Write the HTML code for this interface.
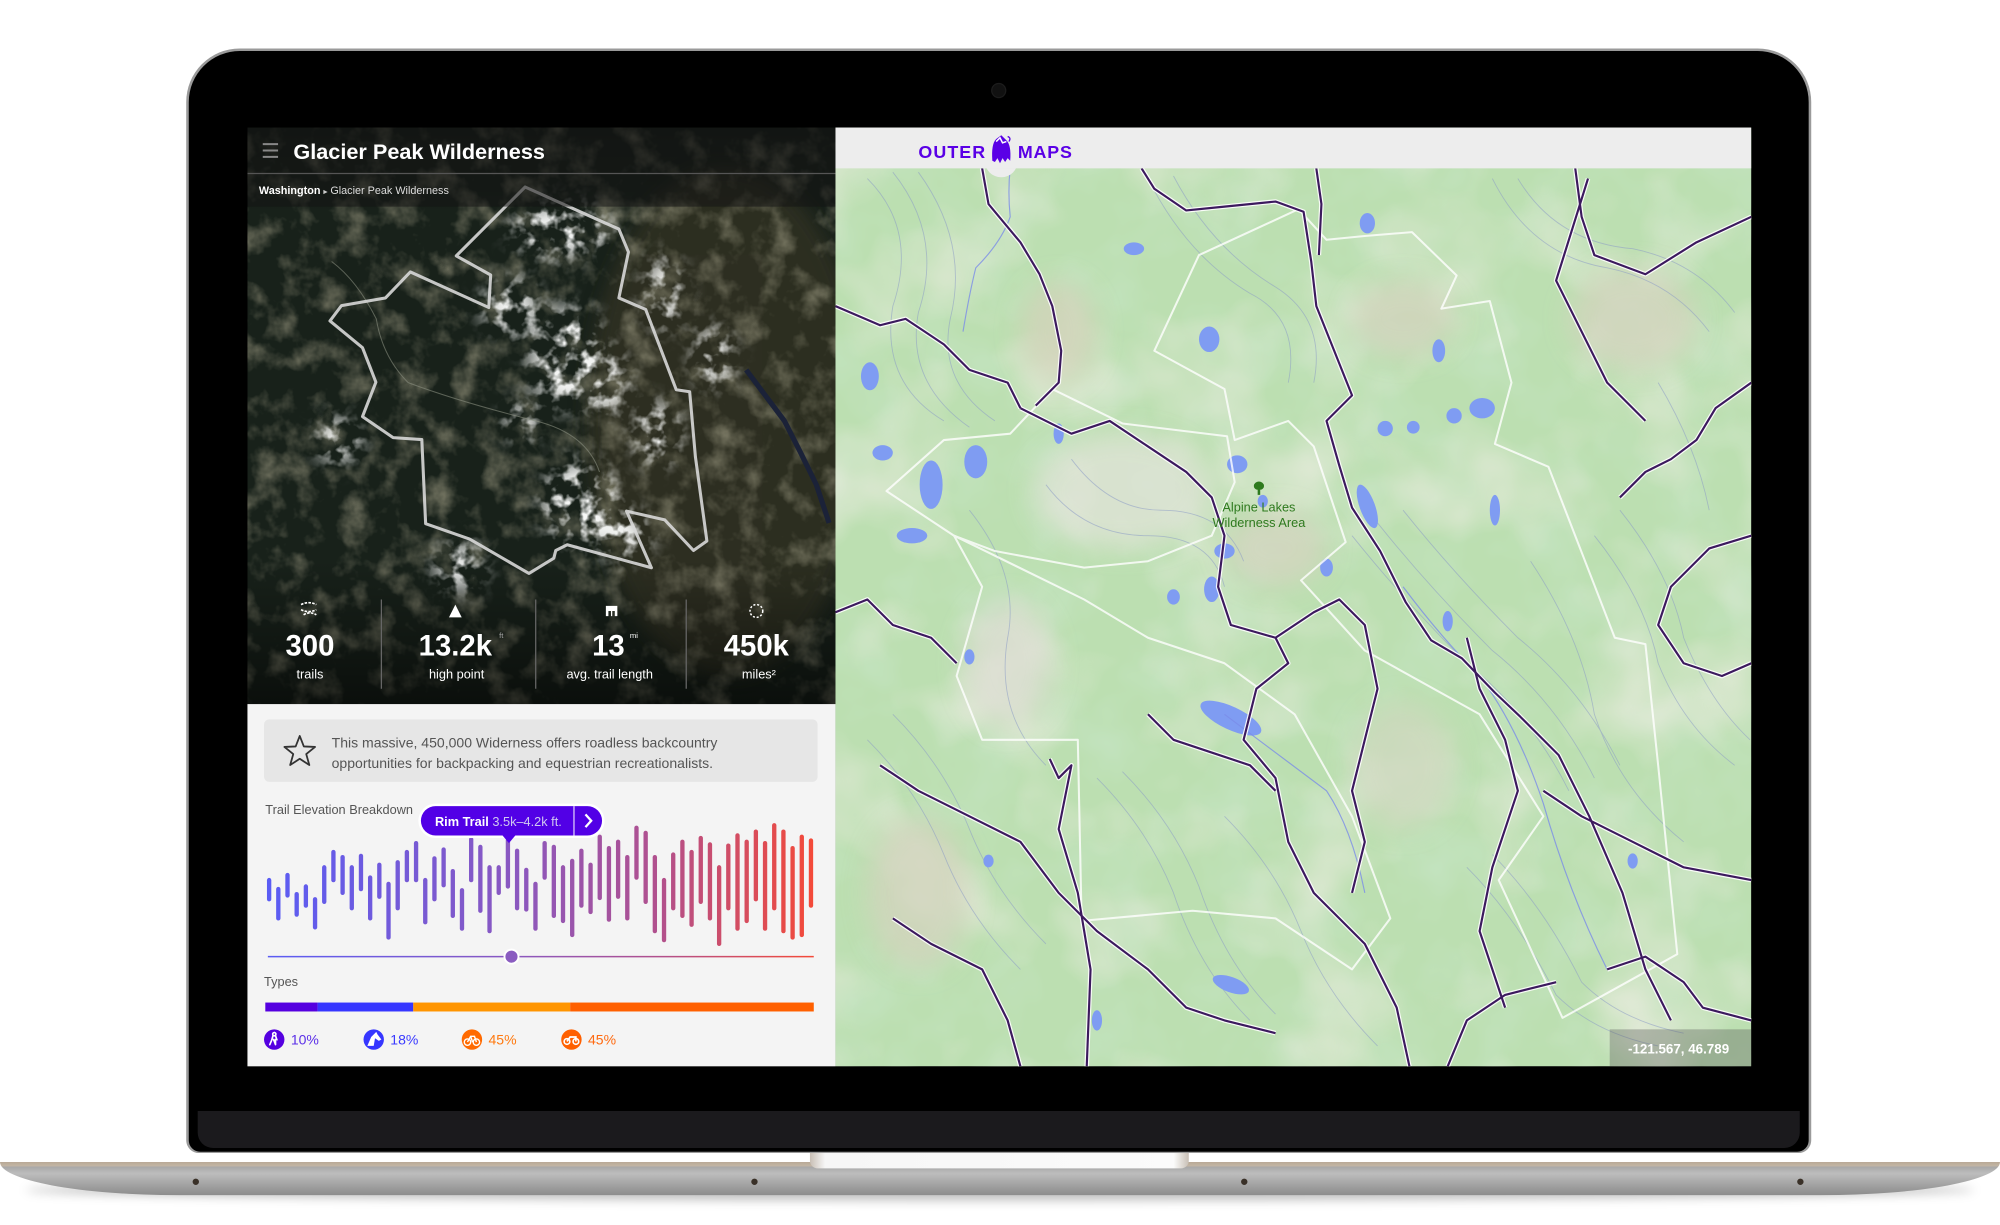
<!DOCTYPE html>
<html><head><meta charset="utf-8">
<style>
html,body{margin:0;padding:0;background:#fff;}
body{width:2000px;height:1224px;overflow:hidden;position:relative;font-family:"Liberation Sans",Arial,sans-serif;}
#w{position:absolute;left:0;top:0;width:1568px;height:960px;transform:scale(1.27551);transform-origin:0 0;}
.a{position:absolute;}
</style></head><body><div id="w">

<div class="a" style="left:20px;top:925px;width:1528px;height:16px;border-radius:50%;background:rgba(0,0,0,.25);filter:blur(4px)"></div>
<div class="a" style="left:0;top:911px;width:1568px;height:26px;border-radius:0 0 140px 140px/0 0 26px 26px;background:linear-gradient(#b9a996 0,#c2b5a4 3px,#a9a9a9 4px,#bdbdbd 9px,#a2a2a2 18px,#8c8c8c 26px);"></div>
<div class="a" style="left:151px;top:924px;width:5px;height:5px;border-radius:50%;background:#3a3128"></div>
<div class="a" style="left:589px;top:924px;width:5px;height:5px;border-radius:50%;background:#3a3128"></div>
<div class="a" style="left:973px;top:924px;width:5px;height:5px;border-radius:50%;background:#3a3128"></div>
<div class="a" style="left:1409px;top:924px;width:5px;height:5px;border-radius:50%;background:#3a3128"></div>
<div class="a" style="left:635px;top:903px;width:297px;height:13px;border-radius:0 0 6px 6px;background:linear-gradient(90deg,#c8bfb5,#f6f6f6 4%,#fbfbfb 96%,#c8bfb5);"></div>

<div class="a" style="left:146px;top:38px;width:1274px;height:866px;border-radius:42px 42px 10px 10px;background:#9a9a9a;"></div>
<div class="a" style="left:148px;top:40px;width:1270px;height:863px;border-radius:40px 40px 9px 9px;background:#000;"></div>
<div class="a" style="left:155px;top:871px;width:1256px;height:29px;border-radius:0 0 12px 12px;background:#1b1a1d;"></div>
<div class="a" style="left:778px;top:66px;width:10px;height:10px;border-radius:50%;background:#111;box-shadow:0 0 0 1px #1c1c1c"></div>

<svg class="a" style="left:194px;top:100px" width="461" height="452" viewBox="194 100 461 452">
<defs>
<filter id="tex" x="0" y="0" width="100%" height="100%">
<feTurbulence type="fractalNoise" baseFrequency="0.045" numOctaves="4" seed="3"/>
<feColorMatrix type="matrix" values="0 0 0 0 0.30  0 0 0 0 0.29  0 0 0 0 0.20  1.6 0 0 0 -0.75"/>
</filter>
<filter id="snow" x="0" y="0" width="100%" height="100%">
<feTurbulence type="fractalNoise" baseFrequency="0.09" numOctaves="3" seed="11"/>
<feColorMatrix type="matrix" values="0 0 0 0 0.93  0 0 0 0 0.94  0 0 0 0 0.93  4 0 0 0 -1.9"/>
</filter>
<filter id="bl"><feGaussianBlur stdDeviation="7"/></filter>
<filter id="bl2"><feGaussianBlur stdDeviation="9"/></filter>
<mask id="sm" maskUnits="userSpaceOnUse" x="194" y="100" width="461" height="452">
<g fill="#fff" filter="url(#bl2)">
<ellipse cx="440" cy="180" rx="40" ry="22"/><ellipse cx="400" cy="240" rx="22" ry="22"/>
<ellipse cx="445" cy="280" rx="30" ry="40"/><ellipse cx="475" cy="300" rx="18" ry="25"/>
<ellipse cx="455" cy="395" rx="30" ry="35"/><ellipse cx="490" cy="420" rx="20" ry="20"/>
<ellipse cx="360" cy="445" rx="20" ry="20"/><ellipse cx="265" cy="345" rx="18" ry="18"/>
<ellipse cx="520" cy="230" rx="15" ry="30"/><ellipse cx="515" cy="340" rx="18" ry="25"/>
<ellipse cx="560" cy="280" rx="15" ry="25"/><ellipse cx="410" cy="330" rx="15" ry="15"/>
</g></mask>
<linearGradient id="fade" x1="0" y1="0" x2="0" y2="1"><stop offset="0" stop-color="#000" stop-opacity=".3"/><stop offset=".15" stop-color="#000" stop-opacity="0"/><stop offset=".75" stop-color="#000" stop-opacity="0"/><stop offset="1" stop-color="#000" stop-opacity=".55"/></linearGradient>
</defs>
<rect x="194" y="100" width="461" height="452" fill="#18211a"/>
<ellipse cx="570" cy="330" rx="110" ry="200" fill="#3a3726" opacity=".6" filter="url(#bl)"/>
<rect x="194" y="100" width="461" height="452" filter="url(#tex)"/>
<rect x="194" y="100" width="461" height="452" filter="url(#snow)" mask="url(#sm)"/>
<path d="M585,290 Q600,310 615,330 Q628,355 640,380 L650,410" stroke="#1b2238" stroke-width="4" fill="none"/>
<path d="M260,205 Q280,220 295,250 Q300,280 320,300 Q360,315 420,330 Q460,340 470,370" stroke="#8a8f80" stroke-width=".8" fill="none" opacity=".6"/>
<rect x="194" y="100" width="461" height="452" fill="url(#fade)"/>
<g transform="translate(188.2,94.1) scale(0.3)">
<polygon points="745,175 945,265 990,285 1015,345 990,465 1060,495 1140,705 1175,710 1190,880 1220,1100 1185,1125 1110,1045 1010,1022 1075,1170 855,1110 825,1125 820,1145 755,1185 600,1095 485,1055 475,835 400,830 320,775 355,685 320,595 235,525 265,485 380,465 445,397 650,490 655,405 565,355" fill="none" stroke="#d8d8d8" stroke-width="8" stroke-linejoin="round" opacity=".9"/>
</g>
<rect x="194" y="100" width="461" height="62" fill="#141414" opacity=".55"/>
<line x1="194" y1="136" x2="655" y2="136" stroke="#555" stroke-width="1"/>
<g stroke="#888" stroke-width="1.6"><line x1="206" y1="113" x2="218" y2="113"/><line x1="206" y1="118" x2="218" y2="118"/><line x1="206" y1="123" x2="218" y2="123"/></g>
<text x="230" y="124.5" fill="#fff" font-size="17" font-weight="bold" font-family="Liberation Sans, sans-serif">Glacier Peak Wilderness</text>
<text x="203" y="152" fill="#fff" font-size="8.5" font-weight="bold" font-family="Liberation Sans, sans-serif">Washington <tspan fill="#ccc" font-size="6">▸</tspan><tspan fill="#ddd" font-weight="normal"> Glacier Peak Wilderness</tspan></text>
<g stroke="#666" stroke-width="1"><line x1="299" y1="470" x2="299" y2="540"/><line x1="420" y1="470" x2="420" y2="540"/><line x1="538" y1="470" x2="538" y2="540"/></g>
<g fill="#fff" font-family="Liberation Sans, sans-serif" text-anchor="middle">
<text x="243" y="514" font-size="23" font-weight="bold">300</text>
<text x="357" y="514" font-size="23" font-weight="bold">13.2k</text>
<text x="393" y="500" font-size="6" fill="#aaa">ft</text>
<text x="477" y="514" font-size="23" font-weight="bold">13</text>
<text x="497" y="500" font-size="6">mi</text>
<text x="593" y="514" font-size="23" font-weight="bold">450k</text>
<text x="243" y="532" font-size="10">trails</text>
<text x="358" y="532" font-size="10">high point</text>
<text x="478" y="532" font-size="10">avg. trail length</text>
<text x="595" y="532" font-size="10">miles²</text>
</g>
<path d="M236,474 q6,-3 12,0 M236,478 q6,3 12,0 M238,482 q5,-3 10,0" stroke="#fff" stroke-width="1.3" fill="none" stroke-dasharray="2 1"/>
<path d="M352,484 L357,474 L362,484 Z" fill="#fff"/>
<path d="M475,475 h9 v8 h-2 v-4 h-2 v4 h-1 v-4 h-2 v4 h-2z" fill="#fff"/>
<circle cx="593" cy="479" r="5" fill="none" stroke="#fff" stroke-width="1.2" stroke-dasharray="1.6 1.4"/>
</svg>

<div class="a" style="left:194px;top:552px;width:461px;height:284px;background:#f4f4f4"></div>
<div class="a" style="left:207px;top:564px;width:434px;height:49px;border-radius:4px;background:#e6e6e6"></div>
<svg class="a" style="left:220px;top:574px" width="30" height="30" viewBox="0 0 30 30"><path d="M15,3 L18.2,11.2 L27,11.6 L20.1,17.2 L22.5,25.8 L15,20.9 L7.5,25.8 L9.9,17.2 L3,11.6 L11.8,11.2 Z" fill="none" stroke="#333" stroke-width="1.4" stroke-linejoin="round"/></svg>
<div class="a" style="left:260px;top:575px;font-size:11px;line-height:16px;color:#555;white-space:nowrap">This massive, 450,000 Widerness offers roadless backcountry<br>opportunities for backpacking and equestrian recreationalists.</div>
<div class="a" style="left:208px;top:630px;font-size:10px;color:#555;white-space:nowrap;width:119px;overflow:hidden">Trail Elevation Breakdown</div>

<svg class="a" style="left:194px;top:620px" width="461" height="216" viewBox="194 620 461 216">
<defs><linearGradient id="bg" gradientUnits="userSpaceOnUse" x1="210" y1="0" x2="638" y2="0">
<stop offset="0" stop-color="#5a5cf4"/><stop offset=".45" stop-color="#8a58c0"/><stop offset=".72" stop-color="#b2508c"/><stop offset="1" stop-color="#f44a38"/></linearGradient></defs>
<g stroke="url(#bg)" stroke-width="3.4" stroke-linecap="round">
<line x1="211" y1="690" x2="211" y2="705"/><line x1="218.2" y1="697" x2="218.2" y2="720"/><line x1="225.4" y1="686" x2="225.4" y2="702"/><line x1="232.6" y1="701" x2="232.6" y2="717"/><line x1="239.8" y1="695" x2="239.8" y2="710"/><line x1="247" y1="705" x2="247" y2="727"/><line x1="254.2" y1="680" x2="254.2" y2="707"/><line x1="261.4" y1="668" x2="261.4" y2="690"/><line x1="268.6" y1="672" x2="268.6" y2="700"/><line x1="275.8" y1="680" x2="275.8" y2="712"/><line x1="283" y1="671" x2="283" y2="697"/><line x1="290.2" y1="688" x2="290.2" y2="720"/><line x1="297.4" y1="678" x2="297.4" y2="703"/><line x1="304.6" y1="693" x2="304.6" y2="735"/><line x1="311.8" y1="676" x2="311.8" y2="712"/><line x1="319" y1="668" x2="319" y2="690"/><line x1="326.2" y1="661" x2="326.2" y2="690"/><line x1="333.4" y1="690" x2="333.4" y2="723"/><line x1="340.6" y1="673" x2="340.6" y2="705"/><line x1="347.8" y1="666" x2="347.8" y2="694"/><line x1="355" y1="683" x2="355" y2="718"/><line x1="362.2" y1="698" x2="362.2" y2="728"/><line x1="369.4" y1="658" x2="369.4" y2="690"/><line x1="376.6" y1="664" x2="376.6" y2="714"/><line x1="383.8" y1="680" x2="383.8" y2="730"/><line x1="391" y1="680" x2="391" y2="700"/><line x1="398.2" y1="659" x2="398.2" y2="695"/><line x1="405.4" y1="667" x2="405.4" y2="712"/><line x1="412.6" y1="682" x2="412.6" y2="713"/><line x1="419.8" y1="693" x2="419.8" y2="728"/><line x1="427" y1="661" x2="427" y2="688"/><line x1="434.2" y1="664" x2="434.2" y2="718"/><line x1="441.4" y1="680" x2="441.4" y2="722"/><line x1="448.6" y1="675" x2="448.6" y2="733"/><line x1="455.8" y1="667" x2="455.8" y2="710"/><line x1="463" y1="678" x2="463" y2="715"/><line x1="470.2" y1="656" x2="470.2" y2="704"/><line x1="477.4" y1="665" x2="477.4" y2="721"/><line x1="484.6" y1="660" x2="484.6" y2="703"/><line x1="491.8" y1="672" x2="491.8" y2="720"/><line x1="499" y1="649" x2="499" y2="688"/><line x1="506.2" y1="653" x2="506.2" y2="707"/><line x1="513.4" y1="672" x2="513.4" y2="730"/><line x1="520.6" y1="690" x2="520.6" y2="737"/><line x1="527.8" y1="670" x2="527.8" y2="712"/><line x1="535" y1="660" x2="535" y2="718"/><line x1="542.2" y1="668" x2="542.2" y2="725"/><line x1="549.4" y1="657" x2="549.4" y2="707"/><line x1="556.6" y1="662" x2="556.6" y2="720"/><line x1="563.8" y1="680" x2="563.8" y2="740"/><line x1="571" y1="663" x2="571" y2="712"/><line x1="578.2" y1="655" x2="578.2" y2="728"/><line x1="585.4" y1="660" x2="585.4" y2="722"/><line x1="592.6" y1="652" x2="592.6" y2="705"/><line x1="599.8" y1="661" x2="599.8" y2="728"/><line x1="607" y1="647" x2="607" y2="712"/><line x1="614.2" y1="652" x2="614.2" y2="730"/><line x1="621.4" y1="665" x2="621.4" y2="735"/><line x1="628.6" y1="656" x2="628.6" y2="733"/><line x1="635.8" y1="659" x2="635.8" y2="710"/>
</g>
<line x1="210" y1="750" x2="638" y2="750" stroke="url(#bg)" stroke-width="1.2"/>
<circle cx="401" cy="750" r="5.5" fill="#8a5cc0" stroke="#fff" stroke-width="1.5"/>
<rect x="328" y="630" width="146" height="27" rx="13.5" fill="#fff"/>
<rect x="330" y="632" width="142" height="23" rx="11.5" fill="#5200e6"/>
<path d="M394,655 L399,661 L404,655 Z" fill="#5200e6"/>
<line x1="450" y1="632" x2="450" y2="655" stroke="#fff" stroke-width=".8"/>
<path d="M459,638.5 L463.5,643.5 L459,648.5" stroke="#fff" stroke-width="1.8" fill="none"/>
<text x="341" y="647.5" font-size="10" fill="#fff" font-weight="bold" font-family="Liberation Sans, sans-serif">Rim Trail <tspan font-weight="normal" fill="#d0c8f0">3.5k–4.2k ft.</tspan></text>
<text x="207" y="773" font-size="10" fill="#555" font-family="Liberation Sans, sans-serif">Types</text>
<rect x="208" y="786" width="41" height="7" fill="#5500e0"/>
<rect x="249" y="786" width="75" height="7" fill="#3636ff"/>
<rect x="324" y="786" width="123" height="7" fill="#ff9500"/>
<rect x="447" y="786" width="191" height="7" fill="#ff6000"/>
<circle cx="215" cy="815" r="8" fill="#5500e0"/>
<path d="M215,809.5 a1.3,1.3 0 1,0 0.1,0 M214,812 l2,0 l1,3 l-1,0 l0,4 M214,812 l-1,3.5 l-1.5,3.5 M214.5,815 l1.5,4" stroke="#fff" stroke-width="1.3" fill="none" stroke-linecap="round"/>
<circle cx="293" cy="815" r="8" fill="#3636ff"/>
<path d="M288,820 L291,813 L295,809 L296,811 L299,815 L297,816 L294,814 L293,820 Z" fill="#fff"/>
<circle cx="370" cy="815" r="8" fill="#ff6a00"/>
<g stroke="#fff" stroke-width="1.1" fill="none"><circle cx="366.5" cy="817" r="2.5"/><circle cx="373.5" cy="817" r="2.5"/><path d="M366.5,817 L369,812.5 L372,812.5 L373.5,817 M369,812.5 L370.5,817"/></g>
<circle cx="448" cy="815" r="8" fill="#ff6000"/>
<g stroke="#fff" stroke-width="1.3" fill="none"><circle cx="444.5" cy="816.5" r="2.2"/><circle cx="451.5" cy="816.5" r="2.2"/><path d="M444.5,816.5 L447,813 L451.5,813 L451.5,816.5"/></g>
<g font-size="11" font-family="Liberation Sans, sans-serif"><text x="228" y="819" fill="#5a2ee8">10%</text><text x="306" y="819" fill="#3a3aff">18%</text><text x="383" y="819" fill="#ff7a10">45%</text><text x="461" y="819" fill="#ff6a10">45%</text></g>
</svg>

<svg class="a" style="left:655px;top:100px" width="718" height="736" viewBox="655 100 718 736">
<defs>
<filter id="mt" x="0" y="0" width="100%" height="100%">
<feTurbulence type="fractalNoise" baseFrequency="0.012" numOctaves="3" seed="8"/>
<feColorMatrix type="matrix" values="0 0 0 0 0.86  0 0 0 0 0.85  0 0 0 0 0.78  1.6 0 0 0 -0.75"/>
</filter>
<filter id="mt2" x="0" y="0" width="100%" height="100%">
<feTurbulence type="fractalNoise" baseFrequency="0.02" numOctaves="3" seed="2"/>
<feColorMatrix type="matrix" values="0 0 0 0 0.56  0 0 0 0 0.78  0 0 0 0 0.55  0 1.4 0 0 -0.6"/>
</filter>
<filter id="mb"><feGaussianBlur stdDeviation="10"/></filter>
<g id="tr">
<path d="M770,132 L775,160 L800,190 L815,215 L825,240 L832,275 L830,300 L812,318"/>
<path d="M895,132 L905,148 L930,165 L960,162 L1000,158 L1022,166 L1028,205 L1032,240 L1046,275 L1060,310 L1040,330 L1050,365 L1060,398 L1082,432 L1102,472 L1122,502 L1146,516 L1172,543 L1192,562 L1222,592 L1246,640 L1272,700 L1290,760 L1310,800"/>
<path d="M1032,132 L1036,160 L1034,200"/>
<path d="M1235,132 L1240,170 L1250,200 L1290,215 L1330,190 L1373,170"/>
<path d="M1373,300 L1345,320 L1330,345 L1310,360 L1290,370 L1270,390"/>
<path d="M655,240 L690,255 L710,250 L740,270 L760,290 L790,300 L800,320"/>
<path d="M655,480 L680,470 L700,490 L730,500 L750,520"/>
<path d="M800,320 L840,340 L870,330 L900,350 L930,370 L950,390 L960,420 L955,460 L965,490 L1000,500 L1010,520 L985,540 L975,580 L1000,610 L1010,660 L1030,700 L1070,740 L1095,790 L1105,836"/>
<path d="M1000,500 L1030,480 L1050,470 L1070,490 L1080,540 L1070,580 L1060,620 L1070,660 L1060,700"/>
<path d="M823,595 L830,610 L840,600 L830,650 L845,700 L855,760 L852,836"/>
<path d="M690,600 L720,620 L760,640 L800,660 L830,700 L860,730 L900,760 L930,790 L960,800 L1000,810"/>
<path d="M1150,500 L1160,540 L1180,580 L1190,620 L1170,680 L1160,730 L1180,790"/>
<path d="M1373,420 L1340,430 L1310,460 L1300,490 L1320,520 L1350,530 L1373,520"/>
<path d="M900,560 L920,580 L950,590 L980,600 L1000,620"/>
<path d="M1210,620 L1240,640 L1280,660 L1320,680 L1373,690"/>
<path d="M1260,760 L1290,750 L1320,770 L1335,790 L1373,800"/>
<path d="M1135,836 L1150,800 L1180,780 L1220,770"/>
<path d="M700,720 L730,740 L770,760 L790,800 L800,836"/>
<path d="M1245,140 L1220,220 L1260,300 L1290,330"/>
</g>
</defs>
<rect x="655" y="100" width="718" height="736" fill="#bcdfb1"/>
<rect x="655" y="100" width="718" height="736" filter="url(#mt2)"/>
<rect x="655" y="100" width="718" height="736" filter="url(#mt)"/>
<g filter="url(#mb)" opacity=".7">
<ellipse cx="880" cy="385" rx="70" ry="45" fill="#e4e4dc"/>
<ellipse cx="790" cy="520" rx="35" ry="50" fill="#dcdcd2"/>
<ellipse cx="1000" cy="430" rx="40" ry="30" fill="#d8d4c2"/>
<ellipse cx="830" cy="260" rx="30" ry="40" fill="#d6d2bc"/>
<ellipse cx="1100" cy="250" rx="40" ry="30" fill="#d6d3bf"/>
<ellipse cx="1280" cy="250" rx="50" ry="40" fill="#d6d3bf"/>
<ellipse cx="1100" cy="600" rx="40" ry="50" fill="#d0d8c0"/>
<ellipse cx="720" cy="700" rx="40" ry="60" fill="#d6d3bf"/>
</g>
<g stroke="#8c9cc6" stroke-width=".7" fill="none" opacity=".55">
<path d="M680,140 Q720,180 700,240 Q690,300 740,330"/><path d="M700,135 Q740,185 720,245 Q710,300 760,335"/>
<path d="M720,135 Q760,190 745,250 Q735,300 780,330"/><path d="M900,140 Q930,200 980,230 Q1020,250 1010,300"/>
<path d="M920,138 Q950,195 1000,225 Q1040,250 1030,300"/><path d="M1170,140 Q1200,200 1260,210 Q1310,220 1340,260"/>
<path d="M1190,140 Q1220,190 1280,195 Q1330,205 1360,245"/><path d="M1060,420 Q1100,470 1150,520 Q1200,560 1230,620"/>
<path d="M1080,410 Q1120,460 1170,510 Q1220,550 1250,610"/><path d="M1100,400 Q1140,450 1190,500 Q1240,540 1270,600"/>
<path d="M860,610 Q900,650 920,700 Q940,760 980,800"/><path d="M880,605 Q920,645 940,695 Q960,755 1000,795"/>
<path d="M700,560 Q740,600 760,650 Q780,700 820,740"/><path d="M680,580 Q720,620 740,670 Q760,720 800,760"/>
<path d="M1250,420 Q1290,470 1300,520 Q1320,570 1360,600"/><path d="M1270,400 Q1310,450 1320,500 Q1340,550 1372,580"/>
<path d="M820,380 Q850,420 900,420 Q950,420 960,460"/><path d="M840,360 Q870,400 910,400 Q960,400 975,440"/>
<path d="M1150,680 Q1190,720 1220,780 Q1250,810 1300,820"/><path d="M1170,670 Q1210,710 1240,770 Q1270,800 1320,810"/>
<path d="M1200,440 Q1240,500 1250,560 Q1270,620 1320,660"/><path d="M960,640 Q1000,680 1020,730 Q1040,780 1080,820"/>
<path d="M760,400 Q800,450 790,500 Q780,560 820,600"/><path d="M1300,300 Q1330,350 1340,400"/>
</g>
<g fill="#7f9cf2">
<ellipse cx="682" cy="295" rx="7" ry="11"/><ellipse cx="730" cy="380" rx="9" ry="19"/><ellipse cx="765" cy="362" rx="9" ry="13"/>
<ellipse cx="889" cy="195" rx="8" ry="5"/><ellipse cx="948" cy="266" rx="8" ry="10"/><ellipse cx="1072" cy="175" rx="6" ry="8"/>
<ellipse cx="1128" cy="275" rx="5" ry="9"/><ellipse cx="1162" cy="320" rx="10" ry="8"/><ellipse cx="1140" cy="326" rx="6" ry="6"/>
<ellipse cx="970" cy="364" rx="8" ry="7"/><ellipse cx="1072" cy="397" rx="6" ry="18" transform="rotate(-20 1072 397)"/>
<ellipse cx="715" cy="420" rx="12" ry="6"/><ellipse cx="950" cy="462" rx="6" ry="10"/>
<ellipse cx="965" cy="563" rx="26" ry="9" transform="rotate(25 965 563)"/><ellipse cx="965" cy="772" rx="15" ry="6" transform="rotate(20 965 772)"/>
<ellipse cx="1086" cy="336" rx="6" ry="6"/><ellipse cx="1172" cy="400" rx="4" ry="12"/><ellipse cx="1135" cy="487" rx="4" ry="8"/>
<ellipse cx="760" cy="515" rx="4" ry="6"/><ellipse cx="692" cy="355" rx="8" ry="6"/><ellipse cx="920" cy="468" rx="5" ry="6"/>
<ellipse cx="830" cy="340" rx="4" ry="8"/><ellipse cx="960" cy="432" rx="8" ry="6"/><ellipse cx="1108" cy="335" rx="5" ry="5"/>
<ellipse cx="1280" cy="675" rx="4" ry="6"/><ellipse cx="775" cy="675" rx="4" ry="5"/><ellipse cx="860" cy="800" rx="4" ry="8"/>
<ellipse cx="990" cy="393" rx="4" ry="5"/><ellipse cx="1040" cy="445" rx="5" ry="7"/>
</g>
<g stroke="#7a8ce8" stroke-width=".9" fill="none" opacity=".8">
<path d="M792,132 Q790,150 792,170 Q785,190 765,210 Q760,230 755,260"/>
<path d="M1100,460 Q1130,500 1160,530 Q1190,570 1210,630 Q1230,700 1260,760"/>
<path d="M960,560 Q1000,590 1040,620 Q1060,650 1070,700"/>
</g>
<g stroke="#fff" stroke-width="1.6" fill="none" opacity=".8" stroke-linejoin="round">
<polygon points="1018,164 1040,188 1070,185 1107,182 1142,216 1130,242 1168,236 1185,300 1172,348 1214,366 1266,500 1290,505 1300,600 1315,748 1290,762 1225,798 1175,690 1210,640 1160,560 1070,510 1020,455 1055,425 1030,350 1010,330 968,345 960,305 905,275 940,200"/>
<polygon points="695,385 740,345 792,340 825,305 880,332 962,342 968,378 950,420 900,440 850,445 780,432 748,420"/>
<polygon points="748,420 770,460 750,530 770,580 845,580 848,722 935,714 1000,720 1060,760 1090,720 1060,640 1015,560 960,520 900,500 850,470"/>
</g>
<use href="#tr" stroke="#fff" stroke-width="3.6" fill="none" stroke-linejoin="round" opacity=".9"/>
<use href="#tr" stroke="#3c1a5e" stroke-width="1.7" fill="none" stroke-linejoin="round"/>
<path d="M983,381 a4,3.5 0 1,1 8,0 a3,3 0 0,1 -3,3 v4 h-2 v-4 a3,3 0 0,1 -3,-3z" fill="#2e7a1e"/>
<text x="987" y="401" text-anchor="middle" font-size="10" fill="#2e7a1e" font-family="Liberation Sans, sans-serif">Alpine Lakes</text>
<text x="987" y="413" text-anchor="middle" font-size="10" fill="#2e7a1e" font-family="Liberation Sans, sans-serif">Wilderness Area</text>
<rect x="1262" y="807" width="111" height="29" fill="#555" opacity=".35"/>
<text x="1316" y="826" text-anchor="middle" font-size="10.5" font-weight="bold" fill="#fff" font-family="Liberation Sans, sans-serif">-121.567, 46.789</text>
<circle cx="785" cy="126" r="13" fill="#ededed"/>
<rect x="655" y="100" width="718" height="32" fill="#ededed"/>
<text x="720" y="124" font-size="14" font-weight="bold" fill="#5a00e6" letter-spacing="1.6" font-family="Liberation Sans, sans-serif" textLength="54">OUTER</text>
<text x="798" y="124" font-size="14" font-weight="bold" fill="#5a00e6" letter-spacing="1.6" font-family="Liberation Sans, sans-serif" textLength="44">MAPS</text>
<path d="M778,126 Q777,113 781,109 L785,106 L789,110 Q793,114 792,126 L790,124 L788,127 L786,124 L784,128 L782,124 L780,127 Z" fill="#5a00e6"/>
<path d="M781,111 L784,108 L786,112 L789,111" stroke="#fff" stroke-width="1.2" fill="none"/>
<path d="M790,107 q3,1 1,4" stroke="#5a00e6" stroke-width="1" fill="none"/>
</svg>

</div></body></html>
